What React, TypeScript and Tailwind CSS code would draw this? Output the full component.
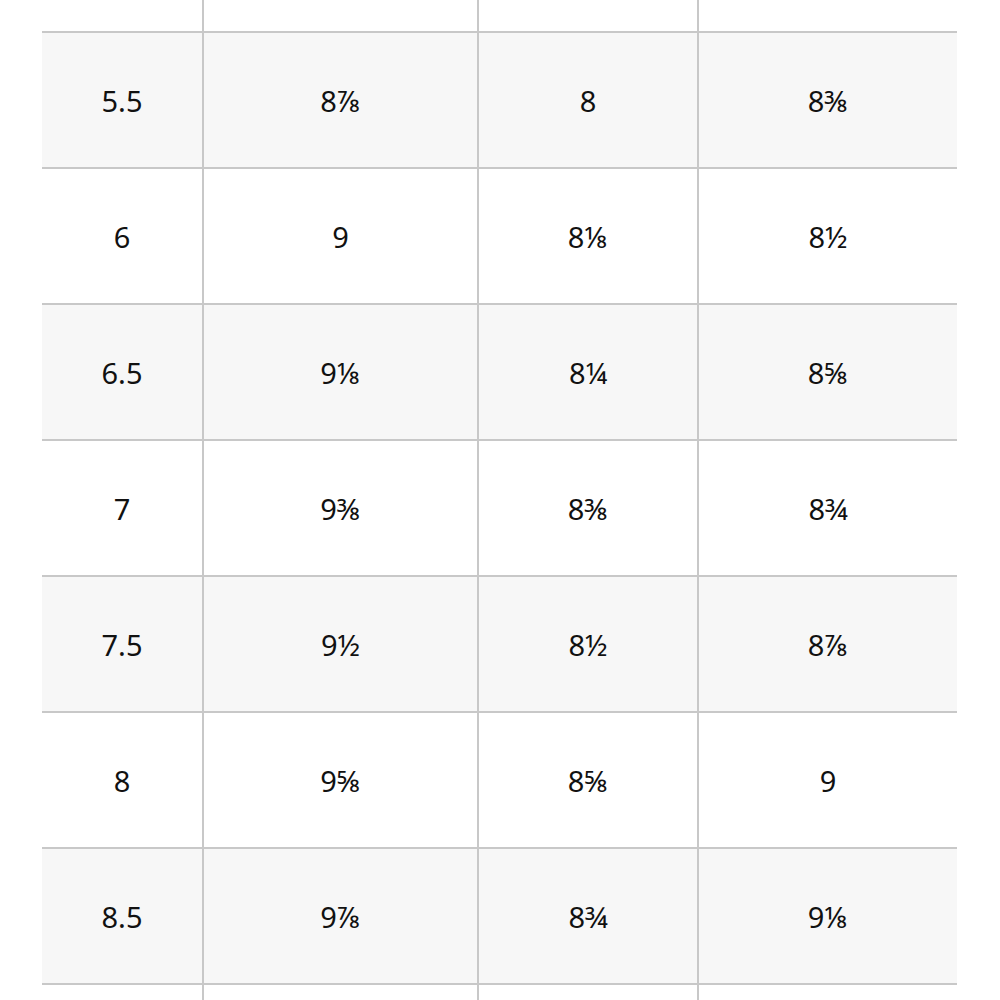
const ROWS: [string, string, string, string][] = [
  ["5.5", "8⅞", "8", "8⅜"],
  ["6", "9", "8⅛", "8½"],
  ["6.5", "9⅛", "8¼", "8⅝"],
  ["7", "9⅜", "8⅜", "8¾"],
  ["7.5", "9½", "8½", "8⅞"],
  ["8", "9⅝", "8⅝", "9"],
  ["8.5", "9⅞", "8¾", "9⅛"],
];

const COLS = "grid grid-cols-[160px_275px_220px_260px]";

function EdgeRow({ className }: { className: string }) {
  return (
    <div className={`${COLS} ${className}`}>
      <div />
      <div className="border-l-2 border-[#c8c8c8]" />
      <div className="border-l-2 border-[#c8c8c8]" />
      <div className="border-l-2 border-[#c8c8c8]" />
    </div>
  );
}

export default function App() {
  return (
    <div
      className="h-[1000px] w-[1000px] overflow-hidden bg-white text-[#111]"
      style={{ fontFamily: '"Noto Sans", "Open Sans", sans-serif' }}
    >
      <div className="ml-[42px] w-[915px]">
        {/* tail of the row above the viewport */}
        <EdgeRow className="h-[31px]" />
        {ROWS.map((row, i) => (
          <div
            key={row[0]}
            className={`${COLS} h-[136px] border-t-2 border-[#c8c8c8] ${i % 2 === 0 ? "bg-[#f7f7f7]" : "bg-white"}`}
          >
            {row.map((cell, j) => (
              <div
                key={j}
                className={`flex items-center justify-center pt-[2px] text-[29px] ${j > 0 ? "border-l-2 border-[#c8c8c8]" : ""}`}
              >
                {cell}
              </div>
            ))}
          </div>
        ))}
        {/* top of the next row, cut by the viewport */}
        <EdgeRow className="h-[40px] border-t-2 border-[#c8c8c8]" />
      </div>
    </div>
  );
}
